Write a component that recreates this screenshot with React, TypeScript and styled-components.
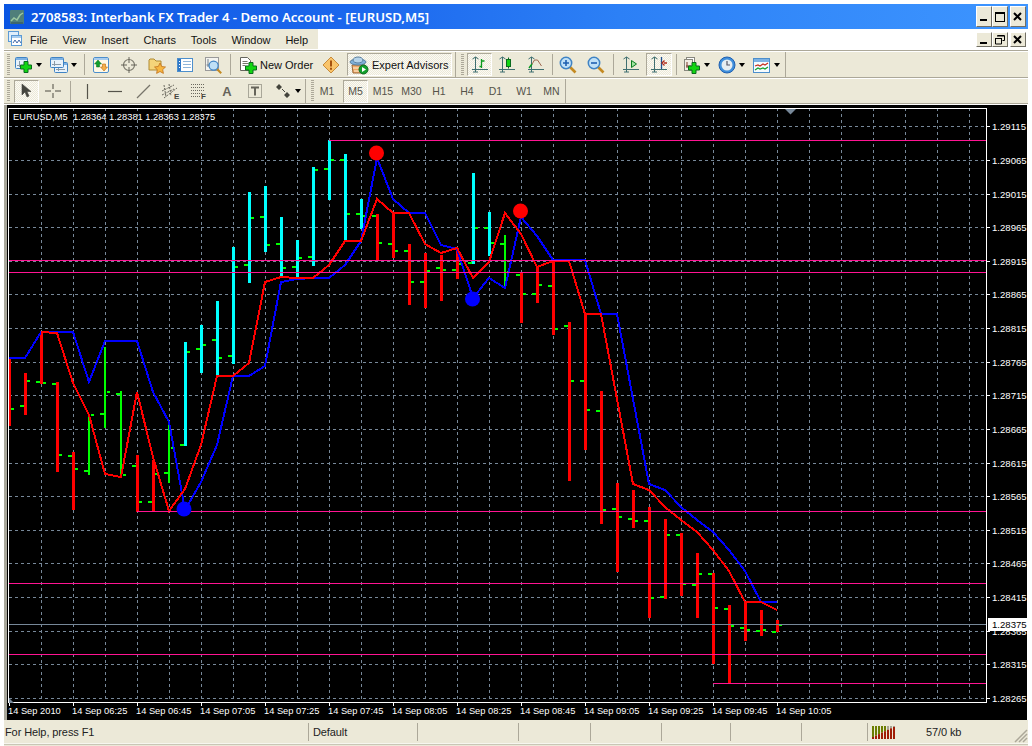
import React from 'react';
import styled, { createGlobalStyle } from 'styled-components';

const Global = createGlobalStyle`
  html, body { margin: 0; padding: 0; background: #fff; overflow: hidden; }
  * { box-sizing: border-box; }
`;

const Page = styled.div`
  width: 1032px; height: 746px; padding: 4px 4px 0 4px; background: #fff;
  display: flex; flex-direction: column;
  font-family: "Liberation Sans", Arial, sans-serif; font-size: 11px; color: #000;
`;
const TitleBar = styled.div`
  height: 25px; flex: none; display: flex; align-items: center; padding: 0 2px 0 6px;
  background: linear-gradient(90deg, #0a55e2 0%, #1c68ee 35%, #2c80f6 60%, #3d95ff 100%);
`;
const TitleText = styled.span`
  flex: 1; margin-left: 7px; color: #fff; white-space: nowrap;
  font-family: "Noto Sans", sans-serif; font-weight: 600; font-size: 13.15px;
`;
const WinBtn = styled.div<{ $h: number; $ml?: number }>`
  width: 16px; height: ${p => p.$h}px; margin-left: ${p => p.$ml ?? 0}px; background: #ece9d8;
  border: 1px solid; border-color: #fff #716f64 #716f64 #fff; flex: none;
  display: flex; align-items: center; justify-content: center;
`;
const MenuRow = styled.div`
  height: 21px; flex: none; display: flex; align-items: center; background: #fff; padding-right: 2px;
`;
const MenuBand = styled.div`
  width: 314px; height: 20px; align-self: flex-start; background: #ece9d8;
  display: flex; align-items: center; padding-left: 4px; margin-right: auto;
`;
const MenuItem = styled.span`
  padding: 1px 7.45px 0; white-space: nowrap; color: #111;
  &:first-of-type { padding-left: 8px; }
`;
const ToolArea = styled.div`
  flex: none; background: #ece9d8; border-top: 1px solid #aca899; box-shadow: inset 0 1px 0 #fff; padding-top: 1px;
`;
const ToolRow = styled.div<{ $h: number }>`
  height: ${p => p.$h}px; display: flex; border-bottom: 1px solid #aca899; box-shadow: 0 1px 0 #fff;
  margin-bottom: 1px;
`;
const Band = styled.div<{ $ml?: number }>`
  display: flex; align-items: center; height: 100%; margin-left: ${p => p.$ml ?? 0}px;
  border-right: 1px solid #aca899;
`;
const Grip = styled.div<{ $w: number }>`
  width: ${p => p.$w}px; height: 100%; flex: none; display: flex; align-items: center;
  &::before {
    content: ""; display: block; width: 3px; height: 22px; margin-left: 3px;
    background: repeating-linear-gradient(180deg, #aca899 0 1px, transparent 1px 2px);
  }
`;
const Tool = styled.div<{ $w: number; $pressed?: boolean; $left?: number }>`
  width: ${p => p.$w}px; height: 23px; flex: none; display: flex; align-items: center; gap: 3px;
  justify-content: ${p => (p.$left !== undefined ? 'flex-start' : 'center')};
  padding-left: ${p => p.$left ?? 0}px; white-space: nowrap; color: #111;
  ${p => p.$pressed ? `
    border: 1px solid; border-color: #aca899 #fff #fff #aca899;
    background: repeating-conic-gradient(#fbfaf5 0 25%, #ece9d8 0 50%) 0 0 / 2px 2px;
  ` : ''}
`;
const Period = styled(Tool)`
  color: #55534a; font-size: 10.5px;
`;
const Spacer = styled.div<{ $w: number }>`
  width: ${p => p.$w}px; height: 100%; flex: none;
`;
const Sep = styled.div<{ $w: number }>`
  width: ${p => p.$w}px; height: 100%; flex: none; display: flex; justify-content: center; align-items: center;
  &::before { content: ""; width: 1px; height: 21px; background: #aca899; }
`;
const Caret = styled.i`
  width: 0; height: 0; flex: none; border: 3px solid transparent; border-top: 4px solid #000; border-bottom: 0;
`;
const ChartWrap = styled.div`
  flex: 1; min-height: 0; margin-right: 1px; background: #000; border-left: 3px solid #a9a79b; line-height: 0;
`;
const ChartSvg = styled.svg`
  display: block;
`;
const ChartText = styled.text<{ $dark?: boolean; $size?: number }>`
  font-family: "Liberation Sans", Arial, sans-serif; font-size: ${p => p.$size ?? 9.3}px; white-space: pre;
  fill: ${p => (p.$dark ? '#000' : '#fff')};
`;
const StatusBar = styled.div`
  height: 24px; flex: none; display: flex; align-items: center; background: #ece9d8;
  border-bottom: 1px solid #f7f6ef; color: #222; position: relative;
`;
const StatusCell = styled.div<{ $w: number; $pad?: number }>`
  width: ${p => p.$w}px; height: 18px; flex: none; display: flex; align-items: center; gap: 30px;
  padding: 1px 0 0 ${p => p.$pad ?? 4}px; letter-spacing: -0.1px;
  white-space: nowrap; border-right: 1px solid #aca899;
`;
const StatusLast = styled(StatusCell)`
  border-right: 0; flex: 1;
`;
const Foot = styled.div`
  height: 2px; flex: none; background: #ece9d8; border-top: 1px solid #c9c6b6;
`;
const ResizeGrip = styled.svg`
  position: absolute; right: 0; bottom: 0;
`;

/* ---------- icons ---------- */
const S = ({ w = 18, h = 18, children }: { w?: number; h?: number; children: React.ReactNode }) => (
  <svg width={w} height={h} viewBox={`0 0 ${w} ${h}`} style={{ flex: 'none' }}>{children}</svg>
);
const Plus = ({ x, y }: { x: number; y: number }) => (
  <path transform={`translate(${x} ${y})`} d="M-2-5.5h4v3.5h3.5v4H2v3.5h-4V2h-3.5v-4H-2z" fill="#12d512" stroke="#0a6b1e" strokeWidth="1" />
);
const Win = ({ x, y, w, h }: { x: number; y: number; w: number; h: number }) => (
  <g>
    <rect x={x + .5} y={y + .5} width={w} height={h} rx="1" fill="#e8f2fb" stroke="#3f83c4" />
    <rect x={x + 1} y={y + 1} width={w - 1} height="2" fill="#7db2e4" />
    <path d={`M${x + 4.5} ${y + 4}v${h - 5}M${x + 2} ${y + h - 2.5}h${w - 4}`} stroke="#8a9aa8" fill="none" />
  </g>
);
const NewChartI = () => <S><Win x={0} y={1} w={12} h={11} /><Plus x={11} y={11} /></S>;
const ProfilesI = () => <S><Win x={4} y={6} w={13} h={10} /><Win x={0} y={1} w={13} h={10} /></S>;
const MarketI = () => (
  <S>
    <rect x="1.5" y="1.5" width="15" height="15" rx="1.5" fill="#fff8e6" stroke="#4d8fcc" />
    <rect x="2" y="2" width="14" height="2" fill="#a9cdee" />
    <path d="M6 4l3.5 4H7.5v3h-3V8H2.500z" fill="#12a02c" stroke="#0a6b1e" strokeWidth=".5" />
    <path d="M12 15l-3.500-4h2V8h3v3h2z" fill="#f5b04a" stroke="#b86a12" strokeWidth=".6" />
  </S>
);
const CrossI = () => (
  <S>
    <circle cx="9" cy="9" r="5.500" fill="none" stroke="#7a786c" strokeWidth="1.200" />
    <path d="M9 1v6M9 11v6M1 9h6M11 9h6" stroke="#66645a" strokeWidth="1" />
  </S>
);
const FolderI = () => (
  <S>
    <path d="M1 14V4l1-1h4l2 2h5v9z" fill="#f5d47a" stroke="#b08a32" />
    <path d="M12 7l1.700 3.500 3.800.5-2.800 2.600.7 3.800-3.400-1.900-3.400 1.900.7-3.800L6.500 11l3.800-.5z" fill="#f7b640" stroke="#c0701a" strokeWidth=".8" />
  </S>
);
const ListI = () => (
  <S>
    <rect x="1.500" y="2.500" width="15" height="13" fill="#fff" stroke="#4d8fcc" />
    <rect x="2" y="3" width="3" height="12" fill="#2f78c8" />
    <path d="M7 5.500h8M7 8.500h8M7 11.500h8" stroke="#8fb5da" />
    <path d="M3 5.500h1M3 8.500h1M3 11.500h1" stroke="#fff" />
  </S>
);
const Lens = ({ sign }: { sign?: '+' | '-' }) => (
  <g>
    <path d="M11 11l5.500 5.500" stroke="#c48a22" strokeWidth="2.600" />
    <circle cx="7" cy="7" r="5.700" fill="#bfe0f7" stroke="#3f83c4" strokeWidth="1.500" />
    {sign && <path d={sign === '+' ? 'M4 7h6M7 4v6' : 'M4 7h6'} stroke="#1f5fb0" strokeWidth="1.600" />}
  </g>
);
const SearchDocI = () => (
  <S>
    <rect x="1.500" y="1.500" width="13" height="13" fill="#f4f4f0" stroke="#9a9a9a" />
    <path d="M4 3v8M2.500 9h8" stroke="#77838c" />
    <g transform="translate(4 4) scale(.8)"><Lens /></g>
  </S>
);
const OrderI = () => (
  <S>
    <path d="M1.500 1.500h7l3 3v10h-10z" fill="#fff" stroke="#66665e" />
    <path d="M3.500 5.500h5M3.500 7.500h6M3.500 9.500h3" stroke="#77776e" />
    <Plus x={12} y={12} />
  </S>
);
const WarnI = () => (
  <S>
    <path d="M9 1l8 8-8 8-8-8z" fill="#f9c46b" stroke="#c88b3a" />
    <path d="M9 4.500v6" stroke="#a5520f" strokeWidth="2" />
    <path d="M9 11.800v2" stroke="#a5520f" strokeWidth="2" />
  </S>
);
const ExpertI = () => (
  <S w={20} h={20}>
    <path d="M3 10h13l-1 8H4z" fill="#f0a866" stroke="#9a6a3c" />
    <path d="M4 13h11M5 16h9" stroke="#fff2d8" />
    <ellipse cx="9" cy="7" rx="8" ry="3" fill="#7fb0d8" stroke="#5a7f9f" />
    <ellipse cx="9" cy="5" rx="5" ry="3" fill="#b6d4ea" stroke="#5a7f9f" />
    <circle cx="14.500" cy="14.500" r="4.500" fill="#12a02c" stroke="#0d6b20" />
    <path d="M13 12l4 2.500-4 2.500z" fill="#fff" />
  </S>
);
const Axes = () => <path d="M4.500 1v15M1.500 3l3-2 3 2M1 13.500h16M2 16h5" stroke="#3f6f70" strokeWidth="1" fill="none" />;
const BarsI = () => <S><Axes /><path d="M10.500 3v9M8.500 10.500h2M10.500 5h3" stroke="#0a9a1e" strokeWidth="1.300" fill="none" /></S>;
const CandleI = () => <S><Axes /><path d="M10.500 1.500v11" stroke="#0a6b1e" /><rect x="8.500" y="3.500" width="4" height="7" fill="#12d512" stroke="#0a6b1e" /></S>;
const LineI = () => <S><Axes /><path d="M4.500 9l3-5 3 0 4 6" stroke="#a06a50" fill="none" /><path d="M2 12l3-4" stroke="#0a9a1e" strokeWidth="1.400" /></S>;
const ZoomI = ({ sign }: { sign: '+' | '-' }) => <S><Lens sign={sign} /></S>;
const AutoI = () => <S><Axes /><path d="M9.500 4.500l5 3.500-5 3.500z" fill="#9fe39f" stroke="#0a7a1e" /></S>;
const ShiftI = () => <S><Axes /><path d="M11.500 1v12" stroke="#1f4f8f" strokeWidth="1.300" /><path d="M17 7h-3M14.500 4.500l-2.500 2.500 2.500 2.500" stroke="#b0281a" strokeWidth="1.300" fill="none" /></S>;
const TemplateI = () => (
  <S>
    <rect x="3.500" y="1.500" width="8" height="11" fill="#fff" stroke="#88887e" />
    <rect x="1.500" y="3.500" width="8" height="11" fill="#f3ede4" stroke="#88887e" />
    <path d="M4 6v6M3 10h5" stroke="#7a3a2a" />
    <Plus x={11} y={12} />
  </S>
);
const ClockI = () => (
  <S>
    <circle cx="9" cy="9" r="8" fill="#3f8fdc" stroke="#1f5fb0" />
    <circle cx="9" cy="9" r="5.500" fill="#e6edf2" />
    <path d="M9 5v4h3" stroke="#556" strokeWidth="1.200" fill="none" />
  </S>
);
const TplChartI = () => (
  <S>
    <rect x=".5" y="2.500" width="16" height="14" fill="#f6fbff" stroke="#4d8fcc" />
    <rect x="1" y="3" width="15" height="3" fill="#7db2e4" />
    <path d="M2 10l3-1 2 1 3-2 2 1 3-2" stroke="#c8301e" strokeWidth="1.200" fill="none" />
    <path d="M2 14l3-2 2 1 3-1 2 1 3-2" stroke="#12a02c" strokeWidth="1.200" fill="none" />
  </S>
);
const ArrowI = () => (
  <S><path d="M4 2v11l3-3 2 5 2-1-2-4.500h4z" fill="#45453f" stroke="#45453f" strokeWidth=".6" /></S>
);
const ThinCross = () => <S><path d="M9 2v5M9 11v5M1 9h6M11 9h6" stroke="#4c4a40" /></S>;
const VLine = () => <S><path d="M9.500 2v15" stroke="#55534a" strokeWidth="1.200" /></S>;
const HLine = () => <S><path d="M2 9.500h14" stroke="#55534a" strokeWidth="1.200" /></S>;
const TLine = () => <S><path d="M3 16L16 3" stroke="#77756a" strokeWidth="1.200" /></S>;
const ChartLetter = styled.text`
  font-family: "Liberation Sans", Arial, sans-serif; font-size: 8px; font-weight: 700; fill: #44443c;
`;
const ChannelI = () => (
  <S w={20} h={18}>
    <path d="M1 13l12-6M1 9l12-6M3 16L16 6M3 3l2 12M8 2l2 12" stroke="#6a685e" fill="none" strokeDasharray="2 1" />
    <ChartLetter x={13} y={17}>E</ChartLetter>
  </S>
);
const FibI = () => (
  <S w={20} h={18}>
    <path d="M2 2.500h13M2 5.500h13M2 8.500h13M2 11.500h11M2 14.500h9" stroke="#6a685e" strokeDasharray="1 1" />
    <ChartLetter x={12} y={17}>F</ChartLetter>
  </S>
);
const BigA = styled.span`
  font-size: 13px; font-weight: 700; color: #66645a;
`;
const TextBoxI = () => (
  <S>
    <rect x="2.500" y="2.500" width="13" height="13" fill="none" stroke="#66645a" strokeDasharray="1 1" />
    <path d="M5 5.500h8M9 5.500v8" stroke="#66645a" strokeWidth="2" />
  </S>
);
const ArrowsI = () => (
  <S>
    <path d="M5 2l3 3-3 3-3-3zM13 10l3 3-3 3-3-3z" fill="#44443c" />
    <path d="M8 7l3 3" stroke="#44443c" />
  </S>
);
const MenuIcon = () => (
  <S w={14} h={16}>
    <rect x=".5" y=".5" width="10" height="10" fill="#dfeefb" stroke="#5b9ad6" />
    <rect x="3.500" y="4.500" width="10" height="10" fill="#fff" stroke="#5b9ad6" />
    <rect x="4" y="5" width="9" height="2" fill="#a9cdee" />
    <path d="M5 12l2-3 2 3 2-3 2 3" stroke="#4068a8" fill="none" />
  </S>
);
const AppIcon = () => (
  <S w={14} h={14}>
    <rect width="14" height="14" rx="1" fill="#4f7f7a" />
    <path d="M1 11l3-3 3 2 3-5 3-2" stroke="#9cc8a0" strokeWidth="1.500" fill="none" />
    <path d="M1 13h12" stroke="#2a4f60" />
  </S>
);
const MinGlyph = ({ y }: { y: number }) => <S w={10} h={12}><rect x="1" y={y} width="7" height="2" fill="#000" /></S>;
const MaxGlyph = () => <S w={12} h={12}><rect x="1.500" y="1.500" width="9" height="9" fill="none" stroke="#000" /><rect x="1" y="1" width="10" height="2" fill="#000" /></S>;
const RestoreGlyph = () => (
  <S w={10} h={10}>
    <path d="M2.500.5h7v5h-2M.5 3.500h6v5.500h-6z" fill="none" stroke="#000" />
    <path d="M2 1h7M0 3.500h7" stroke="#000" />
  </S>
);
const CloseGlyph = () => <S w={10} h={10}><path d="M1 1l7 7M8 1l-7 7" stroke="#000" strokeWidth="2" /></S>;
const SignalI = () => (
  <S w={24} h={13}>
    {Array.from({ length: 8 }, (_, i) => {
      const r = 2 + i * 1.45;
      return (
        <g key={i}>
          <rect x={i * 3} y="0" width="2" height={13 - r} fill={i > 4 ? '#8a8878' : '#6b7d00'} opacity={i > 4 ? .7 : 1} />
          <rect x={i * 3} y={13 - r} width="2" height={r} fill="#a01c06" />
        </g>
      );
    })}
  </S>
);

/* ---------- chart data ---------- */
const RED = '#ff0000', CY = '#00ffff', GR = '#00ff00', BL = '#0000ff', SLATE = '#778899', PINK = '#ff1493';
type Bar = [number, number, number, string, number | null, number];
const bars: Bar[] = [
  [9,358,426,RED,null,409],[25,373,415,RED,406,381],[41,332,384,RED,382,383],[57,382,472,RED,384,455],
  [73,452,510,RED,456,469],[89,414,475,GR,471,415],[105,347,428,GR,414,392],[121,391,476,GR,394,475],
  [137,455,512,RED,466,502],[153,460,512,RED,502,474],[169,425,483,GR,473,448],[185,342,446,CY,445,352],
  [201,325,373,CY,349,345],[217,301,377,CY,340,358],[233,247,364,CY,356,267],[249,192,283,CY,265,218],
  [265,186,252,CY,217,245],[281,217,277,CY,244,268],[297,240,279,CY,267,258],[313,167,266,CY,257,170],
  [329,140,200,CY,169,160],[345,154,242,CY,160,214],[361,199,229,CY,214,216],[377,214,260,RED,216,243],
  [393,212,258,RED,244,251],[409,244,305,RED,251,282],[425,253,308,RED,282,271],[441,255,301,RED,268,270],
  [457,248,279,RED,270,264],[473,173,264,CY,263,228],[489,212,256,CY,228,243],[505,235,288,GR,244,272],
  [521,272,323,RED,275,294],[537,266,303,RED,294,285],[553,260,335,RED,286,329],[569,322,481,RED,326,381],
  [585,314,450,RED,381,410],[601,391,524,RED,411,510],[617,483,572,RED,509,517],[633,490,528,RED,519,521],
  [649,507,618,RED,521,598],[665,519,599,RED,597,535],[681,533,596,RED,535,584],[697,553,618,RED,585,574],
  [713,573,664,RED,574,608],[729,605,683,RED,609,626],[745,603,641,RED,628,630],[761,610,636,RED,631,630],
  [777,620,632,RED,632,625],
];
const bluePts = '9,358 25,358 41,332 57,332 73,332 89,382 105,341 121,341 137,341 153,392 169,422 185,510 201,482 217,445 233,376 249,376 265,366 281,282 297,279 313,278 329,278 345,265 361,241 377,158 393,199 409,213 425,213 441,245 457,249 473,298 489,278 505,288 521,217 537,236 553,260 585,260 601,314 617,314 649,484 665,490 681,507 697,520 713,532 729,550 745,571 761,602 777,602';
const redPts = '41,332 57,333 73,383 89,415 105,474 121,477 137,392 153,457 169,511 185,489 201,445 217,376 233,376 249,363 265,282 281,277 297,278 313,278 329,265 345,241 361,241 377,199 393,213 409,213 425,244 441,253 457,248 473,278 489,262 505,213 521,234 537,267 553,261 569,261 585,314 601,314 633,484 649,490 665,507 681,520 697,532 713,550 729,571 745,602 761,602 777,610';
const prices = ['1.29115','1.29065','1.29015','1.28965','1.28915','1.28865','1.28815','1.28765','1.28715','1.28665','1.28615','1.28565','1.28515','1.28465','1.28415','1.28365','1.28315','1.28265'];
const gridRows = [126,160,194,227,261,294,328,362,395,429,463,496,530,563,597,631,664,698];
const times = ['14 Sep 2010','14 Sep 06:25','14 Sep 06:45','14 Sep 07:05','14 Sep 07:25','14 Sep 07:45','14 Sep 08:05','14 Sep 08:25','14 Sep 08:45','14 Sep 09:05','14 Sep 09:25','14 Sep 09:45','14 Sep 10:05'];
const hLines: [number, number][] = [[140,329],[260,8],[272,8],[511,137],[583,8],[654,8],[683,713]];

const Chart = () => {
  const gridX = Array.from({ length: 30 }, (_, i) => 41.5 + 32 * i);
  return (
    <ChartSvg width={1020} height={615} viewBox="7 105 1020 615">
      <g stroke={SLATE} strokeDasharray="3 3" shapeRendering="crispEdges">
        {gridX.map(x => <line key={x} x1={x} y1={108} x2={x} y2={702} />)}
        {gridRows.map(y => <line key={y} x1={9} y1={y + .5} x2={986} y2={y + .5} />)}
      </g>
      <g shapeRendering="crispEdges">
        {bars.map(([x, t, b, c, l, r]) => (
          <g key={x}>
            <rect x={x - 1} y={t} width={c === GR ? 2 : 3} height={b - t} fill={c} />
            {l !== null && <rect x={x - 5} y={l - 1} width={4} height={2} fill={GR} />}
            <rect x={x + 2} y={r - 1} width={3} height={2} fill={GR} />
          </g>
        ))}
        <polyline points={bluePts} fill="none" stroke={BL} strokeWidth={2} />
        <polyline points={redPts} fill="none" stroke={RED} strokeWidth={2} />
        {hLines.map(([y, x]) => <line key={y} x1={x} y1={y + .5} x2={986} y2={y + .5} stroke={PINK} />)}
        <line x1={9} y1={624.5} x2={986} y2={624.5} stroke={SLATE} />
      </g>
      <circle cx={184} cy={509} r={7.500} fill={BL} />
      <circle cx={472.500} cy={299} r={7.500} fill={BL} />
      <circle cx={376.500} cy={153} r={7.500} fill={RED} />
      <circle cx={520.500} cy={211} r={7.500} fill={RED} />
      <g shapeRendering="crispEdges">
        <rect x={8.5} y={108.5} width={978} height={594} fill="none" stroke="#fff" strokeWidth={1} />
        {gridRows.map(y => <line key={y} x1={987} y1={y + .5} x2={990} y2={y + .5} stroke="#fff" />)}
        {times.map((_, i) => <line key={i} x1={9.5 + 64 * i} y1={703} x2={9.5 + 64 * i} y2={706} stroke="#fff" />)}
      </g>
      <path d="M785 109h11l-5.500 5.500z" fill={SLATE} />
      <path d="M9 698l5 5H9z" fill={SLATE} />
      <ChartText x={13} y={120}>EURUSD,M5  1.28364 1.28381 1.28363 1.28375</ChartText>
      {prices.map((p, i) => <ChartText key={p} $size={9.6} x={992} y={gridRows[i] + 3.500}>{p}</ChartText>)}
      <rect x={988} y={618} width={39} height={13} fill="#fff" />
      <ChartText $dark $size={9.6} x={992} y={628}>1.28375</ChartText>
      {times.map((t, i) => <ChartText key={t} x={8 + 64 * i} y={714}>{t}</ChartText>)}
    </ChartSvg>
  );
};

export default function App() {
  return (
    <Page>
      <Global />
      <TitleBar>
        <AppIcon />
        <TitleText>2708583: Interbank FX Trader 4 - Demo Account - [EURUSD,M5]</TitleText>
        <WinBtn $h={21}><MinGlyph y={8} /></WinBtn>
        <WinBtn $h={21}><MaxGlyph /></WinBtn>
        <WinBtn $h={21} $ml={2}><CloseGlyph /></WinBtn>
      </TitleBar>
      <MenuRow>
        <MenuBand>
          <MenuIcon />
          {['File', 'View', 'Insert', 'Charts', 'Tools', 'Window', 'Help'].map(m => <MenuItem key={m}>{m}</MenuItem>)}
        </MenuBand>
        <WinBtn $h={15}><MinGlyph y={8} /></WinBtn>
        <WinBtn $h={15}><RestoreGlyph /></WinBtn>
        <WinBtn $h={15} $ml={2}><CloseGlyph /></WinBtn>
      </MenuRow>
      <ToolArea>
        <ToolRow $h={26}>
          <Band>
            <Grip $w={10} />
            <Tool $w={29}><NewChartI /><Caret /></Tool>
            <Tool $w={40}><ProfilesI /><Caret /></Tool>
            <Sep $w={3} />
            <Tool $w={29}><MarketI /></Tool>
            <Tool $w={28}><CrossI /></Tool>
            <Tool $w={28}><FolderI /></Tool>
            <Tool $w={28}><ListI /></Tool>
            <Tool $w={28}><SearchDocI /></Tool>
            <Sep $w={6} />
            <Tool $w={84} $left={6}><OrderI />New Order</Tool>
            <Tool $w={28}><WarnI /></Tool>
            <Spacer $w={2} />
            <Tool $w={105} $pressed $left={1}><ExpertI />Expert Advisors</Tool>
            <Spacer $w={3} />
          </Band>
          <Band $ml={2}>
            <Grip $w={9} />
            <Tool $w={25} $pressed><BarsI /></Tool>
            <Tool $w={30}><CandleI /></Tool>
            <Tool $w={27}><LineI /></Tool>
            <Sep $w={6} />
            <Tool $w={26}><ZoomI sign="+" /></Tool>
            <Tool $w={29}><ZoomI sign="-" /></Tool>
            <Sep $w={6} />
            <Tool $w={30}><AutoI /></Tool>
            <Tool $w={26} $pressed><ShiftI /></Tool>
            <Sep $w={8} />
            <Tool $w={32}><TemplateI /><Caret /></Tool>
            <Tool $w={38}><ClockI /><Caret /></Tool>
            <Tool $w={32}><TplChartI /><Caret /></Tool>
            <Spacer $w={3} />
          </Band>
        </ToolRow>
        <ToolRow $h={25}>
          <Band>
            <Grip $w={10} />
            <Tool $w={25} $pressed><ArrowI /></Tool>
            <Tool $w={28}><ThinCross /></Tool>
            <Sep $w={6} />
            <Tool $w={28}><VLine /></Tool>
            <Tool $w={28}><HLine /></Tool>
            <Tool $w={28}><TLine /></Tool>
            <Tool $w={28}><ChannelI /></Tool>
            <Tool $w={28}><FibI /></Tool>
            <Tool $w={28}><BigA>A</BigA></Tool>
            <Tool $w={28}><TextBoxI /></Tool>
            <Tool $w={36}><ArrowsI /><Caret /></Tool>
          </Band>
          <Band $ml={2}>
            <Grip $w={8} />
            <Period $w={22}>M1</Period>
            <Spacer $w={5} />
            <Period $w={25} $pressed>M5</Period>
            <Period $w={30}>M15</Period>
            <Period $w={27}>M30</Period>
            <Period $w={28}>H1</Period>
            <Period $w={28}>H4</Period>
            <Period $w={29}>D1</Period>
            <Period $w={28}>W1</Period>
            <Period $w={27}>MN</Period>
          </Band>
        </ToolRow>
      </ToolArea>
      <ChartWrap><Chart /></ChartWrap>
      <StatusBar>
        <StatusCell $w={305} $pad={1}>For Help, press F1</StatusCell>
        <StatusCell $w={109}>Default</StatusCell>
        <StatusCell $w={101} />
        <StatusCell $w={72} />
        <StatusCell $w={71} />
        <StatusCell $w={69} />
        <StatusCell $w={71} />
        <StatusCell $w={66} />
        <StatusLast $w={150}><SignalI />57/0 kb</StatusLast>
        <ResizeGrip width={15} height={15} viewBox="0 0 15 15">
          <path d="M14 2L2 14M14 6L6 14M14 10l-4 4" stroke="#aca899" strokeWidth="1.500" />
        </ResizeGrip>
      </StatusBar>
      <Foot />
    </Page>
  );
}
